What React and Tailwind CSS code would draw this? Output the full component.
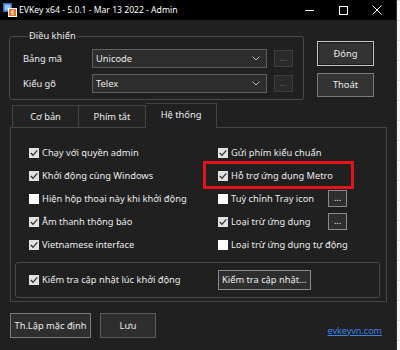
import React from 'react';

const FONT = { fontFamily: '"Noto Sans", "Liberation Sans", sans-serif' };

// small white checkbox like the win32 dark theme one
function Check({ checked }) {
    return (
        <svg width="10" height="10" viewBox="0 0 10 10" className="shrink-0">
            <rect x="0" y="0" width="10" height="10" fill={checked ? '#e2e2e2' : '#ffffff'} />
            {checked && (
                <path d="M1.8 5 L4 7.3 L8.3 2.3" fill="none" stroke="#333333" strokeWidth="1.3" />
            )}
        </svg>
    );
}

function CheckRow({ checked, children }) {
    return (
        <div className="flex items-center gap-[3px] h-[23px] whitespace-nowrap">
            <Check checked={checked} />
            <span>{children}</span>
        </div>
    );
}

function Combo({ value }) {
    return (
        <div className="flex items-center w-[175px] h-[19px] bg-[#2d2d2d] border border-[#5e5e5e] pl-[3px] pr-[6px]">
            <span className="flex-1">{value}</span>
            <svg width="8" height="5" viewBox="0 0 8 5">
                <path d="M0.5 0.5 L4 4 L7.5 0.5" fill="none" stroke="#bdbdbd" strokeWidth="1" />
            </svg>
        </div>
    );
}

function DotsButton({ disabled }) {
    return (
        <div
            className={`flex items-center justify-center w-[19px] h-[17px] border text-[9px] leading-none pb-[2px] ${
                disabled ? 'bg-[#2a2a2a] border-[#3e3e3e] text-[#6e6e6e]' : 'bg-[#2e2e2e] border-[#8a8a8a] text-[#f0f0f0]'
            }`}
        >
            ...
        </div>
    );
}

export default function App() {
    return (
        <div className="w-[400px] h-[350px] flex overflow-hidden bg-[#f3f3f3] text-[9.3px] text-[#ebebeb]" style={FONT}>
            <div className="w-[397px] h-full shrink-0 bg-[#202020] flex flex-col border-r border-[#2c2c2c]">
                {/* title bar */}
                <div className="h-[20px] bg-black flex items-center text-white">
                    <svg width="16" height="16" viewBox="0 0 16 16" className="ml-[2px]">
                        <rect x="1" y="1" width="9" height="9" fill="#2f6fd0" />
                        <rect x="2.5" y="2.5" width="6" height="6" fill="#9cc4f2" />
                        <rect x="6" y="6" width="9" height="9" fill="#ffffff" />
                        <rect x="7" y="7" width="7" height="7" fill="#e8742a" />
                        <path d="M9 9 h3 M9 10.5 h2.5 M9 12 h3" stroke="#ffffff" strokeWidth="0.9" />
                    </svg>
                    <span className="ml-[1px] text-[8.6px]">EVKey x64 - 5.0.1 - Mar 13 2022 - Admin</span>
                    <div className="ml-auto flex items-center h-full">
                        <div className="w-[34px] flex justify-center">
                            <div className="w-[9px] h-px bg-white" />
                        </div>
                        <div className="w-[34px] flex justify-center">
                            <div className="w-[9px] h-[9px] border border-white" />
                        </div>
                        <div className="w-[34px] flex justify-center mr-[2px]">
                            <svg width="10" height="10" viewBox="0 0 10 10">
                                <path d="M0.5 0.5 L9.5 9.5 M9.5 0.5 L0.5 9.5" stroke="#ffffff" strokeWidth="1" />
                            </svg>
                        </div>
                    </div>
                </div>

                {/* top row: controls group + buttons */}
                <div className="flex items-start">
                    <fieldset className="ml-[9px] mt-[9px] w-[295px] border border-[#4a4a4a] rounded-[3px] pl-[13px] pt-[6px] pb-[6px]">
                        <legend className="ml-[5px] px-[1px] leading-[14px]">Điều khiển</legend>
                        <div className="flex flex-col gap-[6px]">
                            <div className="flex items-center">
                                <span className="w-[69px]">Bảng mã</span>
                                <Combo value="Unicode" />
                                <div className="ml-[7px]"><DotsButton disabled /></div>
                            </div>
                            <div className="flex items-center">
                                <span className="w-[69px]">Kiểu gõ</span>
                                <Combo value="Telex" />
                                <div className="ml-[7px]"><DotsButton disabled /></div>
                            </div>
                        </div>
                    </fieldset>
                    <div className="ml-[13px] mt-[21px] flex flex-col gap-[7px]">
                        <div className="w-[57px] h-[25px] flex items-center justify-center bg-[#333333] border border-[#c4c4c4] outline outline-1 outline-[#1a1a1a] -outline-offset-2">
                            Đóng
                        </div>
                        <div className="w-[57px] h-[24px] flex items-center justify-center bg-[#333333] border border-[#7a7a7a]">
                            Thoát
                        </div>
                    </div>
                </div>

                {/* tabs */}
                <div className="ml-[12px] mt-[3px] flex items-end h-[24px] relative z-10">
                    <div className="w-[67px] h-[22px] flex items-center justify-center bg-[#232323] border border-b-0 border-[#454545]">
                        Cơ bản
                    </div>
                    <div className="w-[67px] h-[22px] flex items-center justify-center bg-[#232323] border border-l-0 border-b-0 border-[#454545]">
                        Phím tắt
                    </div>
                    <div className="w-[71px] h-[25px] -mb-px flex items-center justify-center bg-[#202020] border border-l-0 border-b-0 border-[#454545] pb-[3px]">
                        Hệ thống
                    </div>
                </div>

                {/* tab panel */}
                <div className="ml-[10px] w-[377px] h-[175px] border border-[#454545] pt-[13px] flex flex-col">
                    <div className="grid grid-cols-[189px_1fr] pl-[18px]">
                        <div className="flex flex-col">
                            <CheckRow checked>Chạy với quyền admin</CheckRow>
                            <CheckRow checked>Khởi động cùng Windows</CheckRow>
                            <CheckRow>Hiện hộp thoại này khi khởi động</CheckRow>
                            <CheckRow checked>Âm thanh thông báo</CheckRow>
                            <CheckRow checked>Vietnamese interface</CheckRow>
                        </div>
                        <div className="flex flex-col relative">
                            <CheckRow checked>Gửi phím kiểu chuẩn</CheckRow>
                            <CheckRow checked>Hỗ trợ ứng dụng Metro</CheckRow>
                            <div className="flex items-center">
                                <div className="w-[110px]"><CheckRow>Tuỳ chỉnh Tray icon</CheckRow></div>
                                <DotsButton />
                            </div>
                            <div className="flex items-center">
                                <div className="w-[110px]"><CheckRow checked>Loại trừ ứng dụng</CheckRow></div>
                                <DotsButton />
                            </div>
                            <CheckRow>Loại trừ ứng dụng tự động</CheckRow>
                            {/* red highlight box drawn over the screenshot */}
                            <div className="absolute left-[-15px] top-[20px] w-[151px] h-[28px] border-[3px] border-[#e5141c]" />
                        </div>
                    </div>
                    <div className="mt-auto mb-[3px] ml-[4px] w-[365px] h-[36px] border border-[#4a4a4a] rounded-[3px] flex items-center pl-[13px]">
                        <div className="w-[189px]"><CheckRow checked>Kiểm tra cập nhật lúc khởi động</CheckRow></div>
                        <div className="h-[20px] px-[3px] flex items-center bg-[#2e2e2e] border border-[#8a8a8a] whitespace-nowrap">
                            Kiểm tra cập nhật...
                        </div>
                    </div>
                </div>

                {/* bottom buttons */}
                <div className="flex items-center mt-[11px] ml-[10px]">
                    <div className="w-[81px] h-[25px] flex items-center justify-center bg-[#2e2e2e] border border-[#7a7a7a] whitespace-nowrap">
                        Th.Lập mặc định
                    </div>
                    <div className="ml-[9px] w-[56px] h-[25px] flex items-center justify-center bg-[#2e2e2e] border border-[#5c5c5c]">
                        Lưu
                    </div>
                    <span className="ml-auto mr-[14px] mt-[10px] text-[9px] text-[#3c82e6] underline">evkeyvn.com</span>
                </div>
            </div>
            <div className="flex-1 h-full bg-[#f7f7f7] bg-[linear-gradient(#dcdcdc_1px,transparent_1px)] bg-[length:100%_20px]" />
        </div>
    );
}
